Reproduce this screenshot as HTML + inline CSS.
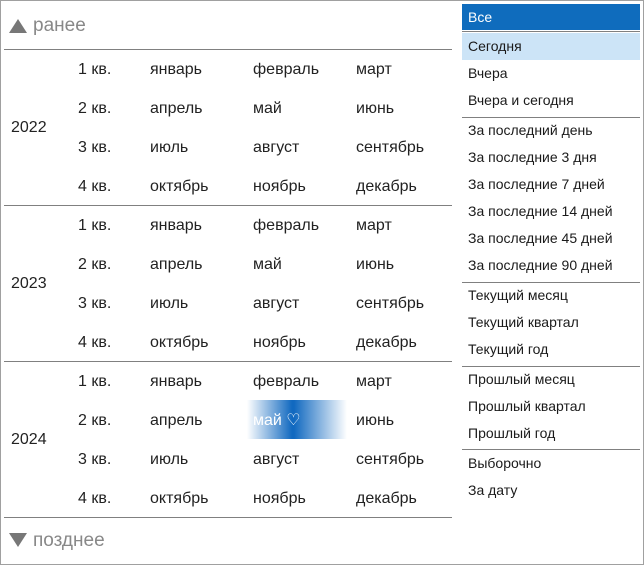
<!DOCTYPE html>
<html><head><meta charset="utf-8"><style>
*{margin:0;padding:0;box-sizing:border-box}
body{width:644px;height:565px;background:#fff;font-family:"Liberation Sans",sans-serif;position:relative;overflow:hidden;color:#222}
.frame{position:absolute;left:0;top:0;width:644px;height:565px;border:1px solid #a0a0a0}
.t{position:absolute;white-space:nowrap;font-size:16px;line-height:20px;font-weight:normal}
.row{position:absolute;left:0;width:450px;height:20px}
.row span{position:absolute;top:0;white-space:nowrap;font-size:16px;line-height:20px}
.a{left:78px}.b{left:150px}.c{left:253px}.d{left:356px}
.hl{position:absolute;left:247px;top:400px;width:100px;height:39px;background:linear-gradient(90deg,#fff 0%,#1169c0 45%,#1169c0 47%,#fff 100%)}
.hline{position:absolute;height:1px;background:#808080}
.r{position:absolute;left:468px;font-size:14px;line-height:18px;white-space:nowrap;color:#1a1a1a}
.rl{position:absolute;left:462px;width:178px;height:1px;background:#808080}
.g{color:#888;font-size:19px;line-height:24px}
</style></head><body>
<div class="frame"></div>
<svg style="position:absolute;left:8px;top:18px" width="20" height="16"><polygon points="10,1 19,15 1,15" fill="#777"/></svg>
<div class="t g" style="left:33px;top:14px">ранее</div>
<svg style="position:absolute;left:8px;top:532px" width="20" height="16"><polygon points="1,1 19,1 10,15" fill="#777"/></svg>
<div class="t g" style="left:33px;top:529px">позднее</div>
<div class="hline" style="left:4px;top:49px;width:448px"></div>
<div class="hline" style="left:4px;top:205px;width:448px"></div>
<div class="hline" style="left:4px;top:361px;width:448px"></div>
<div class="hline" style="left:4px;top:517px;width:448px"></div>
<div class="hl"></div>

<div class="t" style="left:11px;top:118px">2022</div>
<div class="row" style="top:60px"><span class="a">1 кв.</span><span class="b">январь</span><span class="c">февраль</span><span class="d">март</span></div>
<div class="row" style="top:99px"><span class="a">2 кв.</span><span class="b">апрель</span><span class="c">май</span><span class="d">июнь</span></div>
<div class="row" style="top:138px"><span class="a">3 кв.</span><span class="b">июль</span><span class="c">август</span><span class="d">сентябрь</span></div>
<div class="row" style="top:177px"><span class="a">4 кв.</span><span class="b">октябрь</span><span class="c">ноябрь</span><span class="d">декабрь</span></div>

<div class="t" style="left:11px;top:274px">2023</div>
<div class="row" style="top:216px"><span class="a">1 кв.</span><span class="b">январь</span><span class="c">февраль</span><span class="d">март</span></div>
<div class="row" style="top:255px"><span class="a">2 кв.</span><span class="b">апрель</span><span class="c">май</span><span class="d">июнь</span></div>
<div class="row" style="top:294px"><span class="a">3 кв.</span><span class="b">июль</span><span class="c">август</span><span class="d">сентябрь</span></div>
<div class="row" style="top:333px"><span class="a">4 кв.</span><span class="b">октябрь</span><span class="c">ноябрь</span><span class="d">декабрь</span></div>

<div class="t" style="left:11px;top:430px">2024</div>
<div class="row" style="top:372px"><span class="a">1 кв.</span><span class="b">январь</span><span class="c">февраль</span><span class="d">март</span></div>
<div class="row" style="top:411px"><span class="a">2 кв.</span><span class="b">апрель</span><span class="c" style="color:#fff">май ♡</span><span class="d">июнь</span></div>
<div class="row" style="top:450px"><span class="a">3 кв.</span><span class="b">июль</span><span class="c">август</span><span class="d">сентябрь</span></div>
<div class="row" style="top:489px"><span class="a">4 кв.</span><span class="b">октябрь</span><span class="c">ноябрь</span><span class="d">декабрь</span></div>

<div style="position:absolute;left:462px;top:4px;width:178px;height:26px;background:#0f6cbd"></div>
<div class="r" style="top:8px;color:#fff">Все</div>
<div class="rl" style="top:31px"></div>
<div style="position:absolute;left:462px;top:33px;width:178px;height:27px;background:#cce4f7"></div>
<div class="r" style="top:37px">Сегодня</div>
<div class="r" style="top:64px">Вчера</div>
<div class="r" style="top:91px">Вчера и сегодня</div>
<div class="rl" style="top:117px"></div>
<div class="r" style="top:121px">За последний день</div>
<div class="r" style="top:148px">За последние 3 дня</div>
<div class="r" style="top:175px">За последние 7 дней</div>
<div class="r" style="top:202px">За последние 14 дней</div>
<div class="r" style="top:229px">За последние 45 дней</div>
<div class="r" style="top:256px">За последние 90 дней</div>
<div class="rl" style="top:282px"></div>
<div class="r" style="top:286px">Текущий месяц</div>
<div class="r" style="top:313px">Текущий квартал</div>
<div class="r" style="top:340px">Текущий год</div>
<div class="rl" style="top:366px"></div>
<div class="r" style="top:370px">Прошлый месяц</div>
<div class="r" style="top:397px">Прошлый квартал</div>
<div class="r" style="top:424px">Прошлый год</div>
<div class="rl" style="top:449px"></div>
<div class="r" style="top:454px">Выборочно</div>
<div class="r" style="top:481px">За дату</div>
</body></html>
